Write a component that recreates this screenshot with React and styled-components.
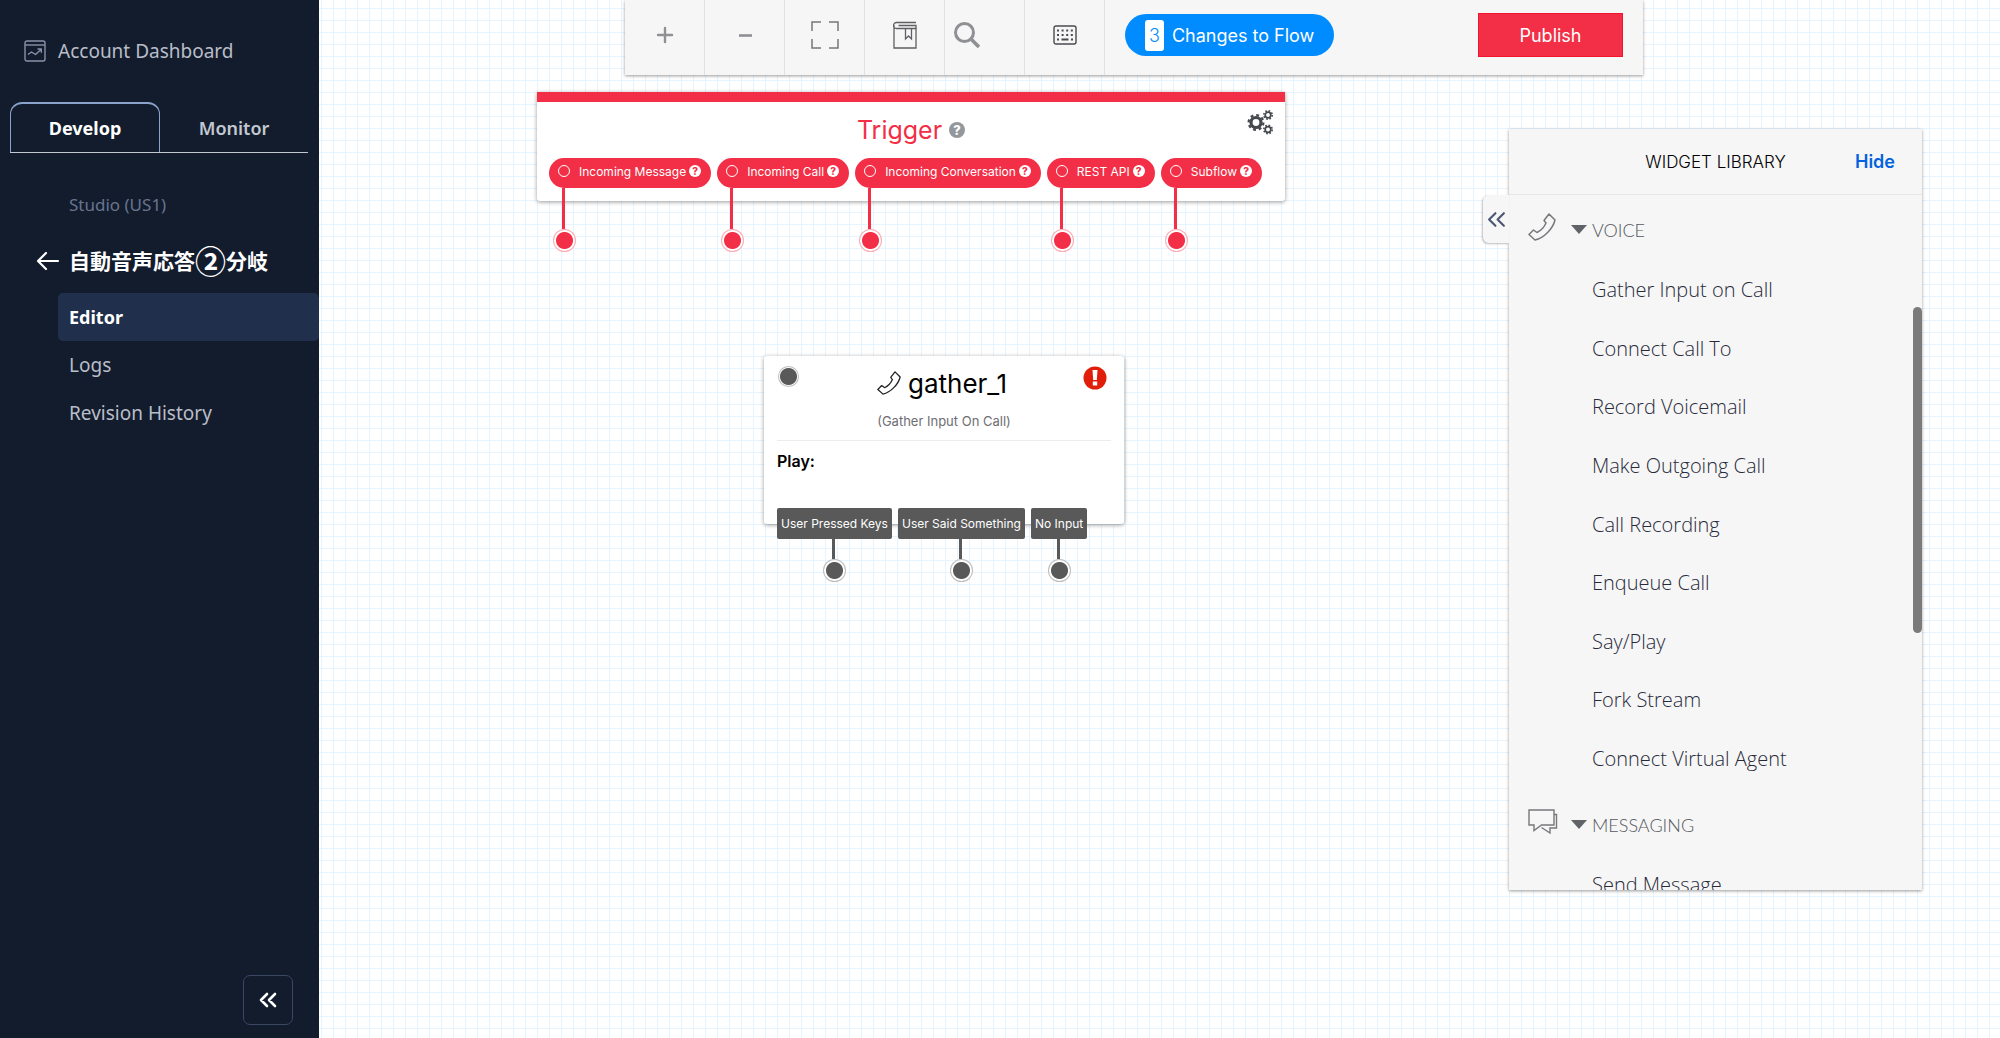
import React from "react";
import styled, { createGlobalStyle, css } from "styled-components";

const triggers = [
  "Incoming Message",
  "Incoming Call",
  "Incoming Conversation",
  "REST API",
  "Subflow",
];

const transitions = ["User Pressed Keys", "User Said Something", "No Input"];

const voiceWidgets = [
  "Gather Input on Call",
  "Connect Call To",
  "Record Voicemail",
  "Make Outgoing Call",
  "Call Recording",
  "Enqueue Call",
  "Say/Play",
  "Fork Stream",
  "Connect Virtual Agent",
];

/* Icons */
function DashboardIcon() {
  return (
    <svg width="22" height="22" viewBox="0 0 22 22" fill="none" stroke="#8891aa" strokeWidth="1.4">
      <rect x="1" y="1" width="20" height="20" rx="2" />
      <path d="M1 5h20" />
      <path d="M4 14.500l3.500-2.500 4 2.500 5.500-5M13.500 9h3.800v3.800" strokeLinejoin="round" />
    </svg>
  );
}

function ArrowLeft() {
  return (
    <svg width="24" height="20" viewBox="0 0 24 20" fill="none" stroke="#fff" strokeWidth="2.2" strokeLinecap="round" strokeLinejoin="round">
      <path d="M22 10H2M10 2L2 10l8 8" />
    </svg>
  );
}

function DoubleChevron({ size = 18, color = "#fff", weight = 2.6 }) {
  return (
    <svg width={size} height={size} viewBox="0 0 18 18" fill="none" stroke={color} strokeWidth={weight} strokeLinecap="round" strokeLinejoin="round">
      <path d="M8 3L2 9l6 6M16 3l-6 6 6 6" />
    </svg>
  );
}

function PlusIcon() {
  return (
    <svg width="18" height="18" viewBox="0 0 18 18" fill="none" stroke="#8f9094" strokeWidth="2.4" strokeLinecap="round">
      <path d="M9 2v14M2 9h14" />
    </svg>
  );
}

function MinusIcon() {
  return (
    <svg width="18" height="18" viewBox="0 0 18 18" fill="none" stroke="#8f9094" strokeWidth="2.6">
      <path d="M3 9.500h13" />
    </svg>
  );
}

function FitIcon() {
  return (
    <svg width="28" height="28" viewBox="0 0 28 28" fill="none" stroke="#76777b" strokeWidth="1.5">
      <path d="M1 10V1h9M18 1h9v9M27 18v9h-9M10 27H1v-9" />
    </svg>
  );
}

function BookIcon() {
  return (
    <svg width="24" height="28" viewBox="0 0 24 28" fill="none" stroke="#5f6064" strokeWidth="1.3">
      <path d="M23 1.500H3.500a2.500 2.500 0 000 6H23V27H1V4" />
      <path d="M5.500 4.500H23v3M12.500 7.500V18l3-3 3 3V7.500" />
    </svg>
  );
}

function SearchIcon() {
  return (
    <svg width="26" height="26" viewBox="0 0 26 26" fill="none" stroke="#8f9094">
      <circle cx="10.500" cy="10.500" r="9" strokeWidth="3" />
      <path d="M17 17l8 8" strokeWidth="3.600" />
    </svg>
  );
}

function KeyboardIcon() {
  return (
    <svg width="24" height="20" viewBox="0 0 24 20" fill="none" stroke="#4a4b50">
      <rect x="1" y="1" width="22" height="18" rx="2" strokeWidth="1.400" />
      <path d="M4 5.500h16M4 10h16" strokeWidth="2" strokeDasharray="2 2.600" />
      <path d="M4 14.500h2M8.500 14.500h7M18 14.500h2" strokeWidth="2" />
    </svg>
  );
}

function GearsIcon() {
  return (
    <svg width="27" height="25" viewBox="0 0 27 25" fill="none" stroke="#45484d">
      <circle cx="9" cy="12.500" r="5" strokeWidth="3.200" />
      <circle cx="9" cy="12.500" r="7.400" strokeWidth="2.200" strokeDasharray="2.900 2.912" />
      <circle cx="21" cy="5" r="2.800" strokeWidth="1.700" />
      <circle cx="21" cy="5" r="4.200" strokeWidth="1.600" strokeDasharray="1.700 1.599" />
      <circle cx="21" cy="19.500" r="2.800" strokeWidth="1.700" />
      <circle cx="21" cy="19.500" r="4.200" strokeWidth="1.600" strokeDasharray="1.700 1.599" />
    </svg>
  );
}

function PhoneIcon({ size = 28, color = "#77787c" }) {
  return (
    <svg width={size} height={size} viewBox="0 0 28 28" fill="none" stroke={color} strokeWidth="1.500" strokeLinejoin="round">
      <path d="M21 1l6 6C25 15.500 16 25 7 27L1 21.500 5.500 17l3.500 2.500c4-2 7.500-6 9-9.500L16 7.500z" />
    </svg>
  );
}

function ChatIcon() {
  return (
    <svg width="30" height="26" viewBox="0 0 30 26" fill="none" stroke="#77787c" strokeWidth="1.400">
      <path d="M1 1h25v15H13.500L6 21.500V16H1z" />
      <path d="M26 5.500h2.500V19H22v5l-8.500-5.500" />
    </svg>
  );
}

function AlertIcon() {
  return (
    <svg width="24" height="24" viewBox="0 0 24 24">
      <circle cx="12" cy="12" r="11.500" fill="#e01e0a" />
      <path d="M9.500 4h5l-.7 10h-3.600z" fill="#fff" />
      <rect x="9.800" y="15.500" width="4.400" height="4" fill="#fff" />
    </svg>
  );
}

export default function App() {
  return (
    <>
      <GlobalStyle />
      <Page>
        <Sidebar>
          <DashboardLink href="#dashboard">
            <DashboardIcon />
            Account Dashboard
          </DashboardLink>
          <Tabs>
            <Tab $active>Develop</Tab>
            <Tab>Monitor</Tab>
          </Tabs>
          <Product href="#studio">Studio (US1)</Product>
          <FlowTitle href="#flows">
            <ArrowLeft />
            <FlowName>
              自動音声応答<Circled>②</Circled>分岐
            </FlowName>
          </FlowTitle>
          <Menu>
            <MenuLink href="#editor" $active>
              Editor
            </MenuLink>
            <MenuLink href="#logs">Logs</MenuLink>
            <MenuLink href="#history">Revision History</MenuLink>
          </Menu>
          <CollapseButton aria-label="Collapse navigation">
            <DoubleChevron />
          </CollapseButton>
        </Sidebar>

        <Canvas>
          <Toolbar>
            <ToolButton aria-label="Zoom in">
              <PlusIcon />
            </ToolButton>
            <ToolButton aria-label="Zoom out">
              <MinusIcon />
            </ToolButton>
            <ToolButton aria-label="Fit to screen">
              <FitIcon />
            </ToolButton>
            <ToolButton aria-label="Documentation">
              <BookIcon />
            </ToolButton>
            <ToolButton aria-label="Search" $start>
              <SearchIcon />
            </ToolButton>
            <ToolButton aria-label="Keyboard shortcuts">
              <KeyboardIcon />
            </ToolButton>
            <ToolActions>
              <ChangesButton>
                <Count>3</Count>
                Changes to Flow
              </ChangesButton>
              <PublishButton>Publish</PublishButton>
            </ToolActions>
          </Toolbar>

          {/* Trigger node */}
          <TriggerNode>
            <TriggerTitle>
              Trigger <Help $muted>?</Help>
            </TriggerTitle>
            <SettingsButton aria-label="Flow settings">
              <GearsIcon />
            </SettingsButton>
            <TriggerList>
              {triggers.map((name) => (
                <TriggerPill key={name}>
                  <Ring />
                  {name}
                  <Help>?</Help>
                  <Connector $color="#f22f46" $start $length={41} />
                </TriggerPill>
              ))}
            </TriggerList>
          </TriggerNode>

          {/* Gather widget node */}
          <WidgetNode>
            <InputDot $color="#595959" />
            <ErrorBadge>
              <AlertIcon />
            </ErrorBadge>
            <WidgetTitle>
              <PhoneIcon size={24} color="#222" />
              gather_1
            </WidgetTitle>
            <WidgetType>(Gather Input On Call)</WidgetType>
            <WidgetBody>Play:</WidgetBody>
            <TransitionList>
              {transitions.map((name) => (
                <Transition key={name}>
                  {name}
                  <Connector $color="#595959" $length={20} />
                </Transition>
              ))}
            </TransitionList>
          </WidgetNode>

          {/* Widget library */}
          <Library>
            <LibraryToggle aria-label="Expand library">
              <DoubleChevron size={19} color="#4b5671" weight={2} />
            </LibraryToggle>
            <LibraryHeader>
              <LibraryTitle>WIDGET LIBRARY</LibraryTitle>
              <HideButton>Hide</HideButton>
            </LibraryHeader>
            <LibraryScroll>
              <GroupHeading>
                <PhoneIcon />
                <Caret />
                VOICE
              </GroupHeading>
              <WidgetList $height="529px">
                {voiceWidgets.map((name) => (
                  <WidgetItem key={name}>{name}</WidgetItem>
                ))}
              </WidgetList>
              <GroupHeading>
                <ChatIcon />
                <Caret />
                MESSAGING
              </GroupHeading>
              <WidgetList>
                <WidgetItem>Send Message</WidgetItem>
              </WidgetList>
            </LibraryScroll>
            <ScrollThumb />
          </Library>
        </Canvas>
      </Page>
    </>
  );
}

const GlobalStyle = createGlobalStyle`
  * {
    box-sizing: border-box;
  }
  body {
    margin: 0;
    font-family: "Inter", "Noto Sans CJK JP", sans-serif;
  }
  button {
    font-family: inherit;
    padding: 0;
    border: none;
    background: none;
    cursor: pointer;
  }
  a {
    text-decoration: none;
  }
  h2, h3, ul {
    margin: 0;
    padding: 0;
    list-style: none;
  }
  svg {
    display: block;
    flex-shrink: 0;
  }
`;

const Page = styled.div`
  display: flex;
  min-height: 100vh;
`;

/* Sidebar */
const Sidebar = styled.nav`
  width: 319px;
  flex-shrink: 0;
  display: flex;
  flex-direction: column;
  padding-bottom: 13px;
  background: #121c2d;
  font-family: "Noto Sans", "Noto Sans CJK JP", sans-serif;
`;

const DashboardLink = styled.a`
  display: flex;
  align-items: center;
  gap: 12px;
  height: 102px;
  padding-left: 24px;
  color: #b9bdc8;
  font-size: 19px;
`;

const Tabs = styled.div`
  display: flex;
  margin: 0 11px 0 10px;
  border-bottom: 1px solid #c3c7d1;
`;

const Tab = styled.button`
  flex: 1;
  height: 50px;
  border-top: 2px solid transparent;
  color: #c3c7d1;
  font-size: 18px;
  font-weight: 600;
  ${(p) =>
    p.$active &&
    css`
      color: #fff;
      font-weight: 700;
      border: 1px solid #8ba3cc;
      border-top-width: 2px;
      border-bottom: none;
      border-radius: 12px 12px 0 0;
    `}
`;

const Product = styled.a`
  margin-top: 40px;
  padding-left: 69px;
  color: #69748f;
  font-size: 17px;
  line-height: 24px;
`;

const FlowTitle = styled.a`
  display: flex;
  align-items: center;
  gap: 9px;
  height: 64px;
  margin-top: 12px;
  padding-left: 36px;
  color: #fff;
`;

const FlowName = styled.span`
  display: flex;
  align-items: center;
  padding-bottom: 2px;
  font-family: "Noto Sans CJK JP", sans-serif;
  font-size: 21px;
  font-weight: 700;
  line-height: 32px;
`;

const Circled = styled.span`
  font-size: 31px;
  font-weight: 700;
`;

const Menu = styled.div`
  display: flex;
  flex-direction: column;
  padding-left: 58px;
`;

const MenuLink = styled.a`
  padding-left: 11px;
  border-radius: 5px;
  color: #b9bdc8;
  font-size: 19px;
  line-height: 48px;
  ${(p) =>
    p.$active &&
    css`
      background: #20304c;
      color: #fff;
      font-size: 18px;
      font-weight: 700;
    `}
`;

const CollapseButton = styled.button`
  display: flex;
  align-items: center;
  justify-content: center;
  width: 50px;
  height: 50px;
  margin: auto 26px 0 auto;
  border: 1px solid #394762;
  border-radius: 7px;
`;

/* Canvas */
const Canvas = styled.main`
  position: relative;
  flex: 1;
  overflow: hidden;
  background-color: #fff;
  background-image: linear-gradient(#e6f4ff 1px, transparent 1px),
    linear-gradient(90deg, #e6f4ff 1px, transparent 1px);
  background-size: 12px 12px;
  background-position: 2px 8px;
`;

const Toolbar = styled.div`
  position: absolute;
  top: 0;
  left: 306px;
  display: flex;
  width: 1018px;
  height: 75px;
  background: #f6f6f6;
  box-shadow: 0 1px 3px rgba(0, 0, 0, 0.4);
`;

const ToolButton = styled.button`
  display: flex;
  align-items: center;
  justify-content: ${(p) => (p.$start ? "flex-start" : "center")};
  width: 80px;
  padding: 0 ${(p) => (p.$start ? "9px" : "0")} 5px;
  border-right: 1px solid #e1e1e3;
`;

const ToolActions = styled.div`
  flex: 1;
  display: flex;
  align-items: center;
  justify-content: space-between;
  padding: 0 20px 5px;
`;

const ChangesButton = styled.button`
  display: flex;
  align-items: center;
  gap: 8px;
  height: 42px;
  padding: 0 20px;
  border-radius: 21px;
  background: #008cff;
  color: #fff;
  font-size: 18px;
`;

const Count = styled.span`
  padding: 0 4px;
  border-radius: 3px;
  background: #fff;
  color: #008cff;
  font-weight: 300;
  line-height: 31px;
`;

const PublishButton = styled.button`
  width: 145px;
  height: 44px;
  border: 1px solid #f5142f;
  background: #f22f46;
  color: #fff;
  font-size: 18px;
`;

/* Nodes */
const Node = styled.section`
  position: absolute;
  background: #fff;
  border-radius: 3px;
  box-shadow: 0 1px 4px rgba(0, 0, 0, 0.4);
`;

const TriggerNode = styled(Node)`
  top: 92px;
  left: 218px;
  width: 748px;
  height: 109px;
  padding: 0 12px;
  border-top: 10px solid #f22f46;
  border-radius: 0 0 3px 3px;
`;

const TriggerTitle = styled.h2`
  display: flex;
  align-items: center;
  justify-content: center;
  gap: 7px;
  height: 56px;
  color: #f22f46;
  font-size: 25px;
  font-weight: 400;
`;

const Help = styled.span`
  display: inline-flex;
  align-items: center;
  justify-content: center;
  width: ${(p) => (p.$muted ? "16px" : "12px")};
  height: ${(p) => (p.$muted ? "16px" : "12px")};
  border-radius: 50%;
  background: ${(p) => (p.$muted ? "#94979b" : "#fff")};
  color: ${(p) => (p.$muted ? "#fff" : "#f22f46")};
  font-size: ${(p) => (p.$muted ? "13px" : "10px")};
  font-weight: 800;
`;

const SettingsButton = styled.button`
  position: absolute;
  top: 8px;
  right: 11px;
`;

const TriggerList = styled.div`
  display: flex;
  gap: 6px;
`;

const TriggerPill = styled.div`
  position: relative;
  display: flex;
  align-items: center;
  height: 30px;
  padding: 0 10px 4px 9px;
  border-radius: 15px;
  background: #f22f46;
  color: #fff;
  font-size: 12px;
  white-space: nowrap;

  ${Help} {
    margin-left: 3px;
  }
`;

const Ring = styled.span`
  width: 12px;
  height: 12px;
  margin-right: 9px;
  border: 1px solid #fff;
  border-radius: 50%;
`;

const Dot = styled.span`
  width: 21px;
  height: 21px;
  border: 1px solid ${(p) => p.$color}66;
  border-radius: 50%;
  background: radial-gradient(${(p) => p.$color} 8px, #fff 9px);
`;

/* Line hanging under a port, ended by a drop point */
const Connector = styled.span`
  position: absolute;
  top: 100%;
  left: ${(p) => (p.$start ? "15px" : "50%")};
  width: 3px;
  height: ${(p) => p.$length}px;
  margin-left: -2px;
  background: ${(p) => p.$color};

  &::after {
    content: "";
    position: absolute;
    top: 100%;
    left: -9px;
    width: 21px;
    height: 21px;
    border: 1px solid ${(p) => p.$color}66;
    border-radius: 50%;
    background: radial-gradient(${(p) => p.$color} 8px, #fff 9px);
  }
`;

const WidgetNode = styled(Node)`
  top: 356px;
  left: 445px;
  width: 360px;
  height: 168px;
  padding: 8px 13px 0;
`;

const InputDot = styled(Dot)`
  position: absolute;
  top: 10px;
  left: 14px;
`;

const ErrorBadge = styled.span`
  position: absolute;
  top: 10px;
  right: 17px;
`;

const WidgetTitle = styled.h3`
  display: flex;
  align-items: center;
  justify-content: center;
  gap: 7px;
  height: 38px;
  padding-right: 4px;
  font-size: 26px;
  font-weight: 400;
`;

const WidgetType = styled.div`
  border-bottom: 1px solid #ececec;
  color: #6e6e73;
  font-size: 13px;
  line-height: 38px;
  text-align: center;
`;

const WidgetBody = styled.div`
  font-size: 16px;
  font-weight: 600;
  line-height: 40px;
`;

const TransitionList = styled.div`
  position: absolute;
  top: 152px;
  left: 13px;
  display: flex;
  gap: 6px;
`;

const Transition = styled.div`
  position: relative;
  padding: 0 4px;
  border-radius: 2px;
  background: #595959;
  color: #fff;
  font-size: 12px;
  line-height: 31px;
  white-space: nowrap;
`;

/* Widget library */
const Library = styled.aside`
  position: absolute;
  top: 129px;
  right: 78px;
  display: flex;
  flex-direction: column;
  width: 413px;
  height: 761px;
  background: #f6f6f6;
  box-shadow: 0 1px 3px rgba(0, 0, 0, 0.4);
`;

const LibraryToggle = styled.button`
  position: absolute;
  top: 66px;
  left: -26px;
  display: flex;
  align-items: center;
  justify-content: center;
  width: 26px;
  height: 48px;
  border-radius: 6px 0 0 6px;
  background: #f6f6f6;
  box-shadow: -1px 1px 2px rgba(0, 0, 0, 0.25);
`;

const LibraryHeader = styled.div`
  display: grid;
  grid-template-columns: 1fr auto 1fr;
  align-items: center;
  flex-shrink: 0;
  height: 66px;
  padding: 0 27px;
  border-bottom: 1px solid #e6e6e8;
`;

const LibraryTitle = styled.h2`
  grid-column: 2;
  font-size: 17px;
  font-weight: 300;
`;

const HideButton = styled.button`
  justify-self: end;
  color: #0263e0;
  font-size: 18px;
  font-weight: 600;
`;

const LibraryScroll = styled.div`
  flex: 1;
  overflow: hidden;
  font-family: "Open Sans", sans-serif;
  font-weight: 300;
`;

const GroupHeading = styled.h3`
  display: grid;
  grid-template-columns: 43px 21px auto;
  align-items: center;
  height: 66px;
  padding: 3px 0 0 19px;
  color: #55585d;
  font-family: "Lato", sans-serif;
  font-size: 18px;
  font-weight: 300;

  svg {
    margin-bottom: 6px;
  }
`;

const Caret = styled.span`
  width: 0;
  border: 8px solid transparent;
  border-top: 9px solid #606368;
  border-bottom: none;
`;

const WidgetList = styled.ul`
  display: flex;
  flex-direction: column;
  justify-content: space-between;
  height: ${(p) => p.$height || "auto"};
  padding: 0 0 2px 83px;
`;

const WidgetItem = styled.li`
  color: #282a3a;
  font-size: 20px;
  line-height: 58px;
`;

const ScrollThumb = styled.div`
  position: absolute;
  top: 178px;
  right: 0;
  width: 9px;
  height: 326px;
  border-radius: 5px;
  background: #7b7b7b;
`;
